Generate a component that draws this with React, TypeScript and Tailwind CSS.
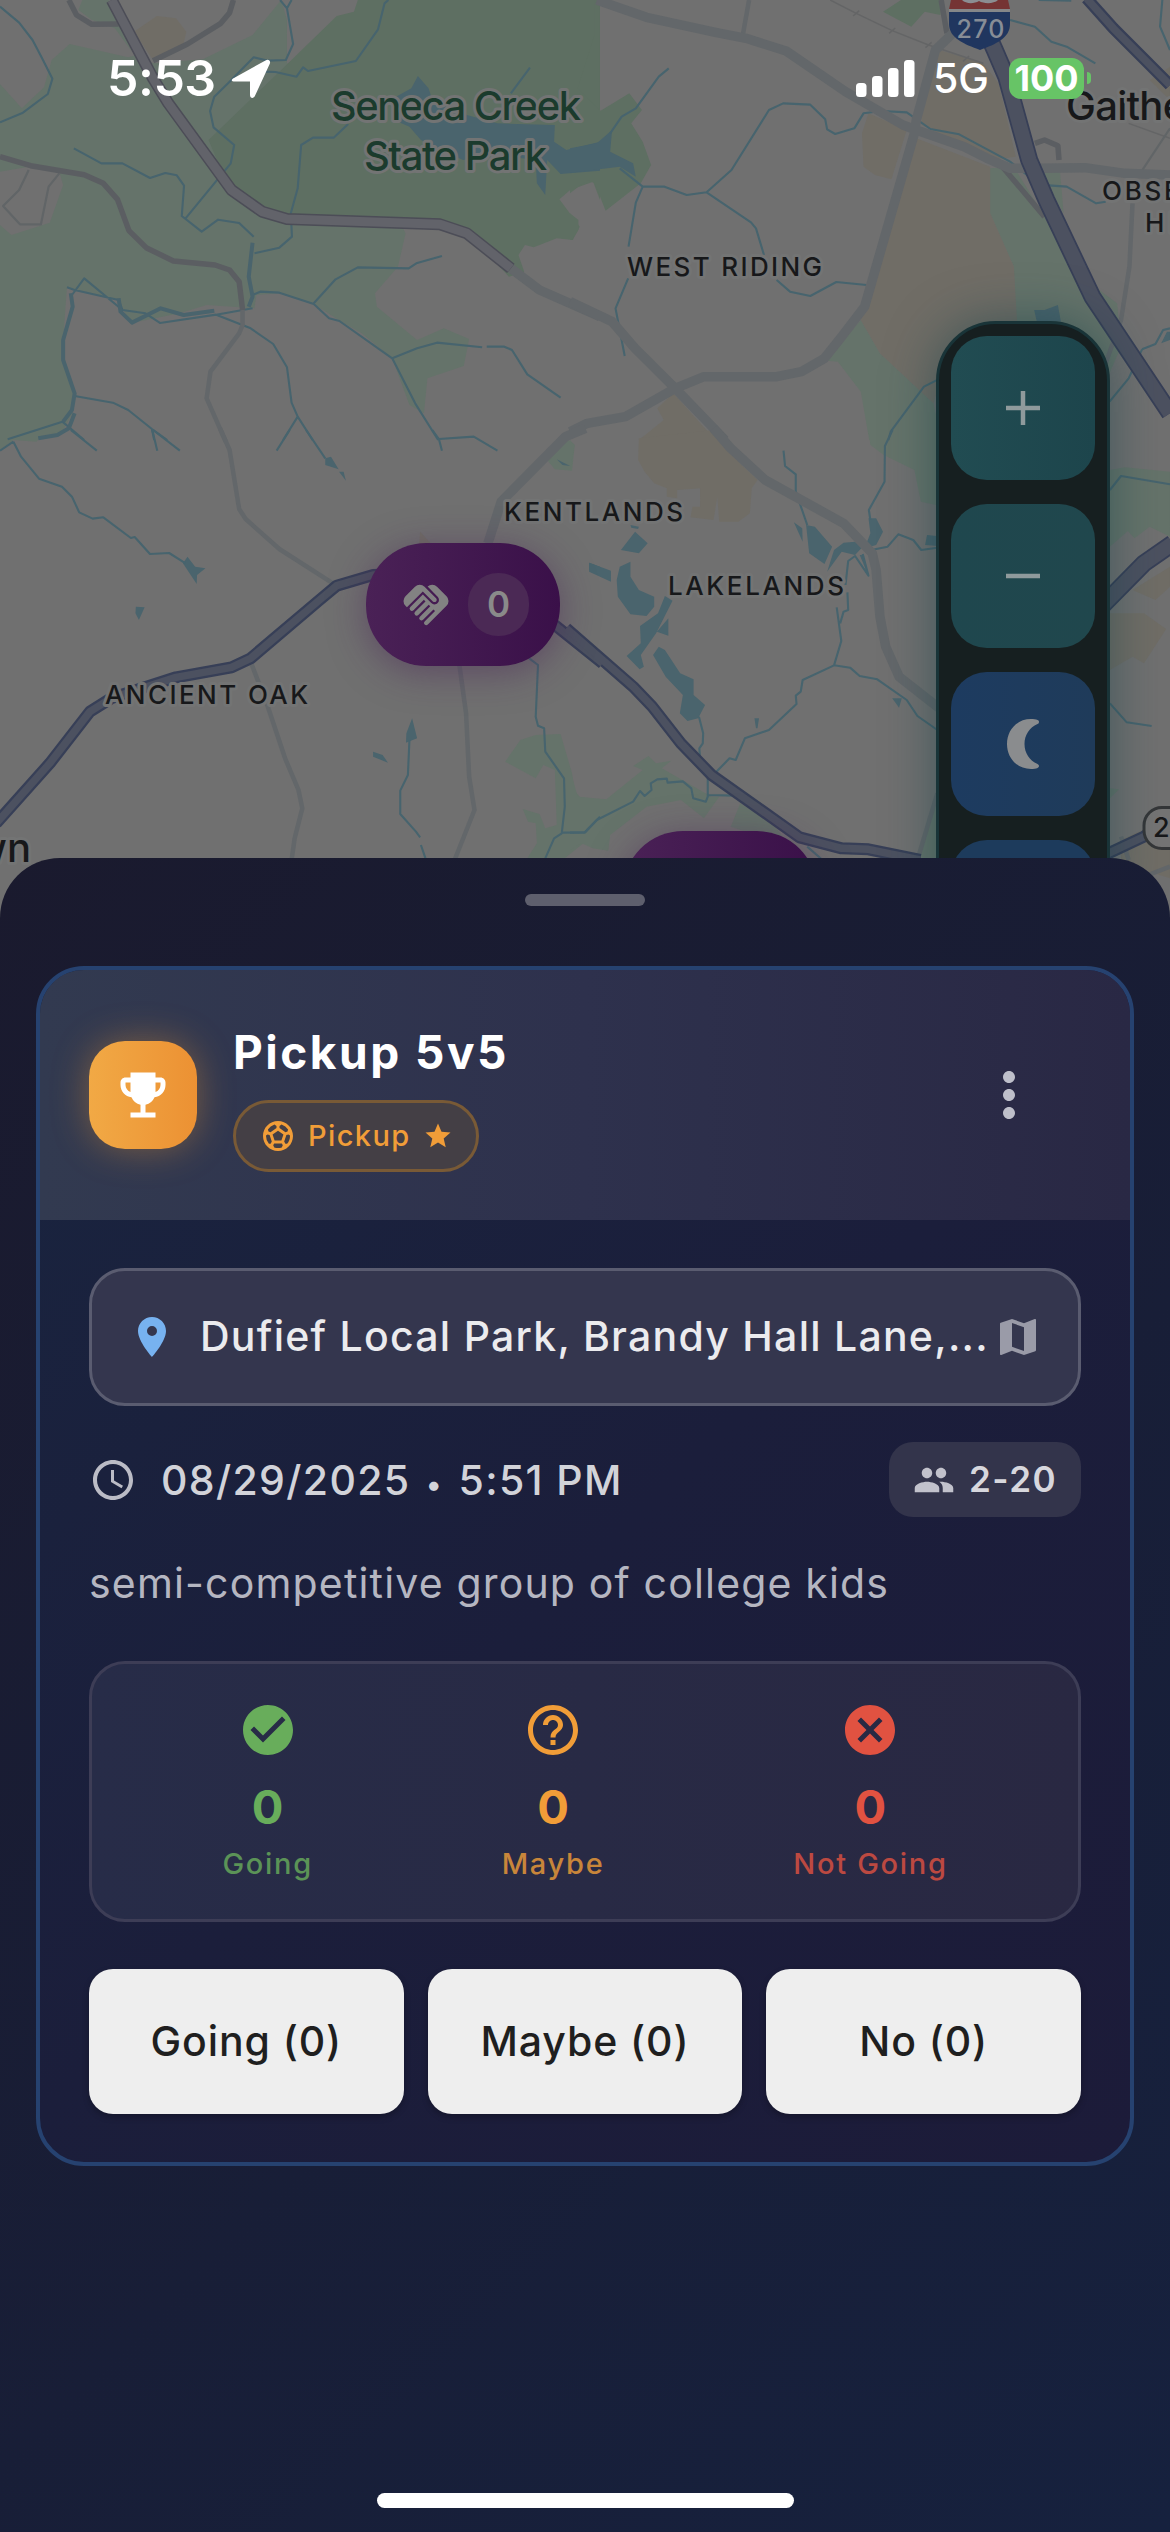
import type { ReactNode } from "react";
import {
  MdAccessTime,
  MdCancel,
  MdCheckCircle,
  MdEmojiEvents,
  MdGroup,
  MdHandshake,
  MdHelpOutline,
  MdLocationOn,
  MdMap,
  MdMoreVert,
  MdSportsSoccer,
  MdStar,
} from "react-icons/md";

/* ---------- map data: four tiles, each drawn in its own 1568 x 1320 grid ---------- */

type Tile = {
  x: number;
  y: number;
  light?: string;
  dark?: string;
  land?: string;
  sand?: string;
  lake?: string;
  stream?: string;
  thickStream?: string;
  thin?: string;
  minor?: string;
  major?: string;
  mauveMinor?: string;
  mauve?: string;
  hwy?: string;
  hwyWide?: string;
  rail?: string;
};

const tiles: Tile[] = [
  {
    x: 0,
    y: 0,
    light:
      "M0 252L57 325 115 262 135 180 182 132 335 172 355 165 400 190 530 178 660 105 735 0 750 60 750 190 850 250 1060 700 1040 800 980 880 985 920 1090 1020 1160 985 1226 1017 1212 1098 1117 1135 1108 1240 1070 1215 1025 1075 945 1000 885 960 820 912 730 880 670 885 665 925 540 915 470 940 340 970 310 900 175 862 165 1020 165 1090 195 1180 190 1240 160 1300 0 1320ZM215 0L285 0 345 155 300 85 240 60 205 30Z",
    dark: "M935 0L925 35 880 48 730 215 545 420 600 570 690 640 760 665 1150 665 1220 695 1330 830 1370 815 1355 765 1372 735 1395 742 1455 715 1497 720 1515 680 1462 598 1490 570 1550 545 1568 600V0Z",
    land: "M0 515L75 500 155 515 165 555 130 668 30 705 0 675Z",
    sand: "M350 95L410 48 460 55 487 95 480 130 400 180Z",
    lake: "M1035 290L1075 265 1092 228 1120 265 1130 300 1220 345 1300 370 1450 375 1448 425 1480 450 1568 425V512L1465 522 1430 480 1425 585 1403 550 1400 480 1300 465 1210 480 1170 460 1100 420 1070 380 1040 365Z",
    stream:
      "M0 20L50 68 85 120 110 175 137 236 125 282 60 338 0 367M732 0L750 25 766 132 747 180 700 182 663 172 600 245 560 290 549 333 558 382 612 435 603 490 485 655M762 0L750 25M690 215L720 216 775 230 792 202 805 213 930 183 988 88 1005 10 1015 0M910 372L872 413 818 413 787 435 778 565 760 640 763 710 730 743 665 760M193 445L265 490 320 490 392 534 432 519 462 526 481 557 475 648 527 695 570 659 625 669 663 710M1155 768L1088 790 1068 805 935 802 877 838 820 910M660 885L680 875 730 878 820 912 860 955 887 963 1025 1075 1085 1210 1145 1320M1025 1075L1090 1045 1142 1028 1260 1042M1272 1040L1318 1040 1338 1050 1378 1123 1465 1193M175 862L195 870 310 900 320 930 380 940 418 969 565 944 660 925M188 885L220 835 320 930M565 944L655 985 714 1032 750 1102 762 1208 778 1250 817 1320M778 1250L740 1320M195 1188L295 1208 335 1230 397 1287 437 1320M397 1287L403 1320M20 1318L163 1265 220 1320M1335 280L1385 203",
    thickStream:
      "M185 880L190 920 165 1020 165 1080 195 1180 188 1230 165 1265M660 728L650 830 660 890 650 920M310 895L315 935 345 968 420 925 480 945 560 932M195 1240L180 1285 150 1305 100 1315",
    thin: "M75 510L50 570 8 618 52 673 107 673 127 560 155 520",
    minor: "M634 930L634 975 625 1000 550 1115 540 1195 590 1325",
    mauveMinor:
      "M0 470L80 497 220 524 270 550 307 598 337 692 382 743 453 783 562 795 600 810 625 845 634 930M180 0L200 45 240 73 310 72M610 0L600 38 577 70 490 132 400 182",
    major: "M1335 805L1410 870 1568 950",
    mauve: "M292 0L400 235 440 310 605 570 685 635 750 657 1150 673 1220 700 1335 805",
  },
  {
    x: 570,
    y: 0,
    dark: "M0 0L64 0 64 105 20 265 80 332 155 280 188 330 160 370 190 425 212 495 185 550 93 632 65 550 45 540 0 580ZM0 640L22 660 22 690 5 720 0 720ZM818 35L865 0 970 0 968 45 927 35 892 80Z",
    light:
      "M1098 505L1160 500 1240 650 1360 900 1400 1010 1360 1100 1166 1000 1160 800 1098 640ZM1230 500L1280 505 1290 640 1250 560ZM1360 850L1430 910 1440 1040 1380 1200 1360 1000ZM760 960L810 1060 950 1210 970 1320 782 1320 760 1175 700 1085 670 1082Z",
    sand: "M965 150L1080 190 1120 250 1165 470 1100 480 920 375 915 300ZM905 415L1098 500 1098 640 1160 800 1170 1000 1000 1020 950 1210 810 1060 760 960 790 870ZM780 340L880 390 840 538 797 525 767 500 763 400ZM270 1180L380 1320 180 1320 245 1260 228 1225ZM1515 240L1568 200V300Z",
    lake: "M0 445L70 430 110 390 105 455 165 490 172 530 130 500 0 518ZM1213 930L1240 930 1275 915 1283 965 1220 965ZM1545 1030L1560 995 1568 995V1020Z",
    stream:
      "M258 205L232 230 172 325 135 350 105 400M130 505L190 560 247 560 305 585 357 577 422 510 520 330 557 310 628 314 667 358 672 388 693 402 743 385 767 340 815 333 880 337 942 387 1017 403 1150 485 1200 530 1250 556 1298 560 1375 610 1400 605M357 577L473 667 486 685 507 765M540 840L575 875 628 888 696 846 775 855M190 560L172 608 153 740M152 835L119 925 143 1068M1150 60L1215 80 1258 125 1298 140 1373 190M1548 0L1542 80 1568 150M968 1135L925 1160 838 1295 832 1320M1568 985L1550 990 1530 1032 1495 1048M1495 1048L1460 1135 1410 1205M1225 0L1310 2",
    thin: "M1568 385L1490 520",
    rail: "M680 0L748 40 842 92 937 135 1080 190M1460 370L1568 415M740 48L756 32M834 100L850 84M929 143L945 127M1027 184L1043 168",
    minor: "M468 0L450 115M1470 610L1462 800 1440 960 1400 1090",
    major:
      "M70 0L200 52 380 97 460 115 565 153 720 275 870 375 905 390 1030 440 1090 475 1150 505 1230 505 1345 503 1450 520 1568 525M1000 100L955 150 905 360 900 400 770 920 710 1010 665 1075 605 1115 540 1130 350 1130 275 1165 145 1250 45 1270 0 1295M0 905L110 965 170 1045 275 1165 405 1320",
    mauveMinor: "M970 0L985 100M1215 430L1240 420 1275 437 1278 480M1130 500L1240 650",
    hwyWide: "M1075 60L1110 150 1140 230 1200 480 1245 600 1365 890 1568 1240",
    hwy: "M1350 -5L1420 85 1568 255",
  },
  {
    x: 0,
    y: 430,
    light:
      "M1320 995L1360 930 1400 915 1465 912 1495 1030 1500 1080 1515 1100 1568 1110V1255L1525 1240 1470 1290 1375 1290 1403 1240 1400 1180 1380 1175 1366 1137 1410 1152 1425 1195 1455 1185 1450 1020 1420 1005 1400 1045ZM1430 90L1480 25 1502 45 1495 122 1450 118ZM0 0L165 0 110 18 95 35 35 30 0 60Z",
    sand: "M1098 305L1130 345 1095 345Z",
    lake: "M490 380L510 410 537 415 515 435 514 462 478 400ZM355 530L378 532 363 570 354 550ZM1077 865L1090 925 1061 938 1062 910ZM975 965L1000 975 1014 998 975 980ZM850 85L865 80 885 118 850 105ZM886 125L898 125 904 152ZM1540 398L1568 410V435L1540 420ZM1455 88L1490 108 1470 105Z",
    stream:
      "M35 35L55 80 102 146 162 170 188 200 207 247 242 266 270 262 342 324 352 321 392 372 442 369 485 400M185 0L253 62M400 0L470 62M398 0L411 62M757 0L723 62M800 0L850 85M1130 0L1147 27 1155 62M1147 27L1238 20 1300 62M0 62L35 35M1383 685L1406 705 1400 860 1406 887 1422 895 1425 965 1474 1045 1476 1130 1468 1210 1448 1225 1425 1285M1468 1208L1528 1207 1568 1160M1070 930L1066 1035 1046 1082 1046 1152 1087 1205 1098 1222M1100 1245L1112 1285",
    minor:
      "M575 -5L600 60 625 237 642 267 730 357 870 460M655 695L675 755 700 830 745 985 780 1080 790 1135 770 1225 762 1290M1200 700L1218 850 1226 1040 1240 1140 1188 1290",
    major: "M1530 -5L1478 20 1310 215 1275 340",
    hwy: "M-10 1180L130 1000 235 845 290 805 460 742 605 712 655 685 835 510 880 467 975 435 1100 430M1400 545L1455 590 1575 700",
  },
  {
    x: 570,
    y: 430,
    light:
      "M0 1015L20 1100 95 1108 190 1020 165 1008 205 978 225 1000 265 992 240 1015 370 1100 390 1100 350 1165 290 1110 200 1130 105 1215 100 1262 60 1255 30 1240 0 1260ZM445 1120L530 1180 600 1290 500 1220 420 1190ZM780 0L957 0 957 225 917 215 900 120 820 75 785 45ZM1411 120L1450 112 1568 125V320L1515 290 1475 325 1458 303 1411 350ZM0 30L12 45 0 120ZM905 1290L957 1090V1290ZM1411 1075L1435 1078 1411 1105Z",
    sand: "M180 25L375 0 440 95 490 150 475 175 470 250 440 275 390 275 385 200 375 270 315 262 320 230 340 230 340 175 280 180 280 205 253 200 253 175 220 160 195 125 178 90ZM1470 480L1568 410V470L1530 510ZM1411 550L1500 550 1558 597 1500 700 1470 680 1411 720ZM1440 1230L1568 1160V1345L1440 1300Z",
    lake: "M170 305L203 340 180 370 133 360ZM158 395L158 440 180 480 220 500 220 530 200 558 158 553 125 500 122 450 130 410ZM50 398L107 422 107 455 50 425ZM248 498L268 512 225 610 185 675 193 710 182 718 148 678 185 640 183 588 230 550ZM257 565L257 617 227 605ZM232 650L248 660 288 730 323 748 323 795 353 825 335 865 307 873 287 850 295 795 250 740 217 675ZM158 285L180 290 178 297 160 293ZM585 277L607 295 608 335ZM617 285L640 290 685 350 665 402 625 370ZM672 425L690 360 715 338 745 335 765 350 745 375 710 365ZM780 265L800 265 818 305 800 345 770 355 785 310ZM933 315L990 322 990 350 928 345ZM757 375L765 375 780 437ZM482 865L494 865 490 895 486 895ZM842 805L867 805 860 833Z",
    stream:
      "M558 62L562 108 590 133 590 185 620 285M843 0L823 48 822 155 781 240 785 270M787 360L830 350 858 313 897 330 918 360 960 353 995 390M765 372L780 437 745 378 727 393 720 465M725 487L727 540 715 545 706 580M697 532L709 633 690 706 608 750 603 785 590 797 592 822 520 900 457 925 433 990 417 985 380 1028M690 706L732 713 757 738 803 748 880 810 908 858 975 912 995 910M337 860L348 910 347 940 338 955 340 985 360 1030 360 1100 355 1115 322 1105 317 1075 295 1054 255 1058 253 1046 228 1048 211 1060 213 1080 195 1098 183 1083 165 1115 70 1170 40 1207 0 1208M360 1095L430 1097M1411 820L1455 877 1520 888M1411 180L1440 138 1568 163M620 1250L660 1290",
    minor: "M960 1090L908 1290M1440 1220L1460 1290M1500 1340L1568 1310",
    major: "M375 -5L420 55 510 150 715 280 790 370 800 420 810 560 825 650 860 740 960 830 1000 860",
    hwy: "M-10 595L70 675 165 770 215 830 290 940 370 1035 600 1222 710 1255 780 1258 915 1290M1370 1290L1500 1220 1568 1170",
    hwyWide: "M1380 540L1500 400 1575 340",
  },
];

type Layer = { key: keyof Tile; fill?: string; stroke?: string; width?: number };

const layers: Layer[] = [
  { key: "light", fill: "#65736a" },
  { key: "dark", fill: "#5e6f62" },
  { key: "land", fill: "#707070" },
  { key: "sand", fill: "#706d66" },
  { key: "lake", fill: "#4a646d" },
  { key: "stream", stroke: "#47646e", width: 2.1 },
  { key: "thickStream", stroke: "#4a646d", width: 4 },
  { key: "rail", stroke: "#646566", width: 1.5 },
  { key: "thin", stroke: "#616567", width: 2.2 },
  { key: "minor", stroke: "#63676a", width: 4.5 },
  { key: "mauveMinor", stroke: "#5b5e62", width: 5.5 },
  { key: "major", stroke: "#63676a", width: 9.5 },
  { key: "mauve", stroke: "#4c4d57", width: 12 },
  { key: "mauve", stroke: "#62636a", width: 9 },
  { key: "hwy", stroke: "#373f57", width: 12 },
  { key: "hwy", stroke: "#4c5160", width: 7.5 },
  { key: "hwyWide", stroke: "#373f57", width: 18 },
  { key: "hwyWide", stroke: "#4c5160", width: 14.5 },
];

type LabelProps = { x: number; y: number; w?: number; size: number; color?: string; anchor?: "start" | "end"; children: string };

function MapLabel({ x, y, w, size, color = "#17181a", anchor = "start", children }: LabelProps) {
  return (
    <text
      x={x}
      y={y}
      textLength={w}
      textAnchor={anchor}
      fontSize={size}
      fontWeight={500}
      fill={color}
      stroke="#737474"
      strokeWidth={6}
      strokeLinejoin="round"
      paintOrder="stroke"
    >
      {children}
    </text>
  );
}

function MapCanvas() {
  return (
    <svg className="absolute inset-x-0 top-0 h-[940px] w-[1170px]" viewBox="0 0 1170 940" fill="none">
      <rect width="1170" height="940" fill="#707070" />
      {layers.map((layer, i) =>
        tiles.map((tile) => {
          const d = tile[layer.key];
          if (typeof d !== "string") return null;
          return (
            <g key={`${i}-${tile.x}-${tile.y}`} transform={`translate(${tile.x} ${tile.y}) scale(.38265 .33333)`}>
              <path
                d={d}
                fill={layer.fill ?? "none"}
                stroke={layer.stroke}
                strokeWidth={layer.width}
                strokeLinejoin="round"
                vectorEffect="non-scaling-stroke"
              />
            </g>
          );
        }),
      )}

      <MapLabel x={331} y={120} w={250} size={40} color="#1b3b2d">Seneca Creek</MapLabel>
      <MapLabel x={364} y={170} w={183} size={40} color="#1b3b2d">State Park</MapLabel>
      <MapLabel x={627} y={276} w={195} size={26}>WEST RIDING</MapLabel>
      <MapLabel x={504} y={521} w={179} size={26}>KENTLANDS</MapLabel>
      <MapLabel x={668} y={595} w={176} size={26}>LAKELANDS</MapLabel>
      <MapLabel x={105} y={704} w={203} size={26}>ANCIENT OAK</MapLabel>
      <MapLabel x={1102} y={199.5} w={216} size={26}>OBSERVATORY</MapLabel>
      <MapLabel x={1145} y={232} w={140} size={26}>HEIGHTS</MapLabel>
      <MapLabel x={1066} y={119.5} w={241} size={40}>Gaithersburg</MapLabel>
      <MapLabel x={31} y={862} size={40} anchor="end">Germantown</MapLabel>

      <path d="M949 9H1010V24C1010 38 996 44 980 50C964 44 949 38 949 24Z" fill="#20365f" />
      <path d="M949 9L951 0H1008L1010 9Z" fill="#753434" />
      <path d="M962 0C966 4 974 4 979 1C984 4 994 4 998 0Z" fill="#8b8e92" />
      <path d="M949 10.5H1010" stroke="#858789" strokeWidth={3} />
      <text x={956.5} y={37.5} textLength={48} fontSize={25} fontWeight={500} fill="#878d96">270</text>

      <rect x={1144} y={807.5} width={70} height={41} rx={18} fill="#747474" stroke="#343638" strokeWidth={3} />
      <text x={1153} y={837} fontSize={27} fontWeight={500} fill="#17181a">28</text>
    </svg>
  );
}

function StatusBar() {
  return (
    <div className="relative flex h-[150px] items-start justify-between pt-[53px] pr-[79px] pl-[107px] text-white">
      <div className="flex h-[50px] items-center">
        <span className="w-[124px] text-[50px] leading-[50px] font-semibold tracking-[-0.5px]">5:53</span>
        <svg className="h-[41px] w-10" viewBox="0 0 40 41">
          <path
            d="M3 20L34.5 2.4C37.4.8 39.8 2.6 38.9 5.6L24 37.8C22.5 41.2 19 40.2 19 37V23.5H4C0 23.5-.3 21.8 3 20Z"
            fill="white"
          />
        </svg>
      </div>
      <div className="flex h-[50px] items-center">
        <svg className="h-[37px] w-[59px]" viewBox="0 0 59 37" fill="white">
          <rect x="0" y="23" width="10.5" height="14" rx="3.5" />
          <rect x="16" y="16" width="10.5" height="21" rx="3.5" />
          <rect x="32" y="8" width="10.5" height="29" rx="3.5" />
          <rect x="48" y="0" width="10.5" height="37" rx="3.5" />
        </svg>
        <span className="ml-[18px] w-[76px] text-[41px] leading-[50px] font-medium">5G</span>
        <div className="flex h-[41px] w-[75px] items-center justify-center rounded-[12px] bg-[#67c466] text-[36px] font-bold">
          100
        </div>
        <div className="ml-[3px] h-[12px] w-1 rounded-r-full bg-[#67c466]" />
      </div>
    </div>
  );
}

function MapMarker({ place }: { place: string }) {
  return (
    <div
      className={`absolute flex h-[123px] w-[194px] items-center rounded-[60px] bg-linear-to-r from-[#4a2156] to-[#3a1049] pl-[33px] shadow-[0_6px_36px_rgba(74,33,86,0.5)] ${place}`}
    >
      <MdHandshake className="size-[54px] text-[#828282]" />
      <div className="ml-[15px] flex h-[63px] w-[61px] items-center justify-center rounded-[30px] bg-[#4b2955] text-[35px] font-semibold text-[#8a8a8a]">
        0
      </div>
    </div>
  );
}

function MapControl({ tone, children }: { tone: string; children: ReactNode }) {
  return <div className={`flex size-[144px] shrink-0 items-center justify-center rounded-[36px] ${tone}`}>{children}</div>;
}

function MapControls() {
  return (
    <div className="absolute top-[321px] left-[936px] flex h-[620px] w-[174px] flex-col gap-6 overflow-hidden rounded-[60px] border-[3px] border-[#193438] bg-[#161f20] p-3 shadow-[0_0_50px_rgba(16,62,70,0.5)]">
      <MapControl tone="bg-linear-to-r from-[#214c52] to-[#1d454c]">
        <svg className="size-9" viewBox="0 0 36 36">
          <path d="M18 1V35M1 18H35" stroke="#8f9a9c" strokeWidth="4.5" />
        </svg>
      </MapControl>
      <MapControl tone="bg-linear-to-r from-[#1f474e] to-[#20474d]">
        <svg className="size-9" viewBox="0 0 36 36">
          <path d="M1 18H35" stroke="#8f9a9c" strokeWidth="4.5" />
        </svg>
      </MapControl>
      <MapControl tone="bg-linear-to-r from-[#1d3b60] to-[#1f3b5a]">
        <svg className="h-[50px] w-8" viewBox="0 0 32 50">
          <path
            d="M24 0C10 0 0 11 0 25S10 50 24 50C26.500 50 29 49.600 30.500 49C32.500 48.200 32.500 46 30.500 45C22.500 41.500 17.500 34 17.500 25S22.500 8.500 30.500 5C32.500 4 32.500 1.800 30.500 1C29 .4 26.500 0 24 0Z"
            fill="#8a8c8e"
          />
        </svg>
      </MapControl>
      <MapControl tone="bg-[#1d3b5c]">{null}</MapControl>
    </div>
  );
}

function EventHeader() {
  return (
    <header className="flex h-[250px] items-center rounded-t-[44px] bg-linear-to-r from-[#323a50] via-[#2e314d] to-[#292844] pr-[49px] pl-[49px]">
      <div className="flex size-[108px] items-center justify-center rounded-[36px] bg-linear-to-r from-[#f1a945] to-[#ec9133] shadow-[0_0_36px_rgba(236,150,50,0.4)]">
        <MdEmojiEvents className="size-[60px] text-white" />
      </div>
      <div className="ml-9 flex flex-col items-start pt-1">
        <h1 className="text-[46px] leading-[60px] font-bold tracking-[2.5px] text-white">Pickup 5v5</h1>
        <div className="mt-[18px] flex h-[72px] w-[246px] items-center rounded-full border-[3px] border-[#795a36] bg-[#443f45] pl-6 text-[#f19d38]">
          <MdSportsSoccer className="size-9" />
          <span className="ml-3 text-[29px] font-medium tracking-[1.4px]">Pickup</span>
          <MdStar className="ml-3 size-[30px]" />
        </div>
      </div>
      <MdMoreVert className="mr-9 ml-auto size-[72px] text-[#bebfca]" />
    </header>
  );
}

type StatProps = { icon: ReactNode; label: string; tone: string };

function Stat({ icon, label, tone }: StatProps) {
  return (
    <div className={`flex flex-col items-center ${tone}`}>
      {icon}
      <span className="mt-[19px] text-[47px] leading-[56px] font-bold">0</span>
      <span className="mt-[11px] text-[29px] leading-9 font-medium tracking-[1.7px] opacity-80">{label}</span>
    </div>
  );
}

function EventCard() {
  return (
    <section className="mt-[60px] rounded-[48px] border-4 border-[#264270] bg-linear-135 from-[#19243f] via-[#1b1e3b] to-[#1c1b39]">
      <EventHeader />
      <div className="flex flex-col px-[49px] py-12">
        <div className="flex h-[138px] items-center rounded-[36px] border-[3px] border-[#5a5c70] bg-[#34364e] pl-9">
          <MdLocationOn className="size-12 shrink-0 text-[#77b2f0]" />
          <span className="ml-6 whitespace-nowrap text-[41px] font-medium tracking-[1.25px] text-[#ebebee]">
            Dufief Local Park, Brandy Hall Lane,...
          </span>
          <MdMap className="mr-9 ml-auto size-12 shrink-0 text-[#9a9ba8]" />
        </div>

        <div className="mt-9 flex h-[75px] items-center">
          <MdAccessTime className="size-12 text-[#bbbcc6]" />
          <span className="ml-6 text-[41px] leading-[60px] font-medium tracking-[1.35px] text-[#d2d3d9]">
            08/29/2025 <span className="mx-[3px] text-[30px] leading-none">•</span> 5:51 PM
          </span>
          <div className="ml-auto flex h-[75px] w-[192px] items-center rounded-3xl bg-[#33344b] pl-6">
            <MdGroup className="size-[42px] text-[#c2c2cc]" />
            <span className="ml-[14px] text-[35px] font-semibold tracking-[1.5px] text-[#d7d7dd]">2-20</span>
          </div>
        </div>

        <p className="mt-9 text-[41px] leading-[60px] tracking-[1.17px] whitespace-nowrap text-[#b5b6c1]">
          semi-competitive group of college kids
        </p>

        <div className="mt-12 flex h-[261px] justify-around rounded-[36px] border-[3px] border-[#3d3d56] bg-linear-to-r from-[#272c48] to-[#292842] px-9 pt-9">
          <Stat icon={<MdCheckCircle className="size-[60px]" />} label="Going" tone="text-[#68ad5b]" />
          <Stat icon={<MdHelpOutline className="size-[60px]" />} label="Maybe" tone="text-[#f19d38]" />
          <Stat icon={<MdCancel className="size-[60px]" />} label="Not Going" tone="text-[#e15241]" />
        </div>

        <div className="mt-[47px] grid h-[145px] grid-cols-3 gap-6">
          {["Going (0)", "Maybe (0)", "No (0)"].map((label) => (
            <button
              key={label}
              className="rounded-3xl bg-[#eeeeee] pt-px text-[41px] font-medium tracking-[0.9px] text-[#1f1f1f] shadow-[0_3px_6px_rgba(0,0,0,0.25)]"
            >
              {label}
            </button>
          ))}
        </div>
      </div>
    </section>
  );
}

export default function App() {
  return (
    <div className="relative flex h-[2532px] w-[1170px] flex-col overflow-hidden bg-[#707070] font-['Inter',sans-serif]">
      <MapCanvas />
      <MapMarker place="left-[366px] top-[543px]" />
      <MapMarker place="left-[623px] top-[831px]" />
      <MapControls />
      <StatusBar />
      <main className="relative mt-[708px] flex flex-1 flex-col rounded-t-[60px] bg-linear-135 from-[#1a1a2e] to-[#16213e] px-9 pt-9">
        <div className="h-3 w-[120px] self-center rounded-full bg-[#5e5f6d]" />
        <EventCard />
        <div className="mt-auto mb-6 h-[15px] w-[417px] self-center rounded-full bg-white" />
      </main>
    </div>
  );
}
